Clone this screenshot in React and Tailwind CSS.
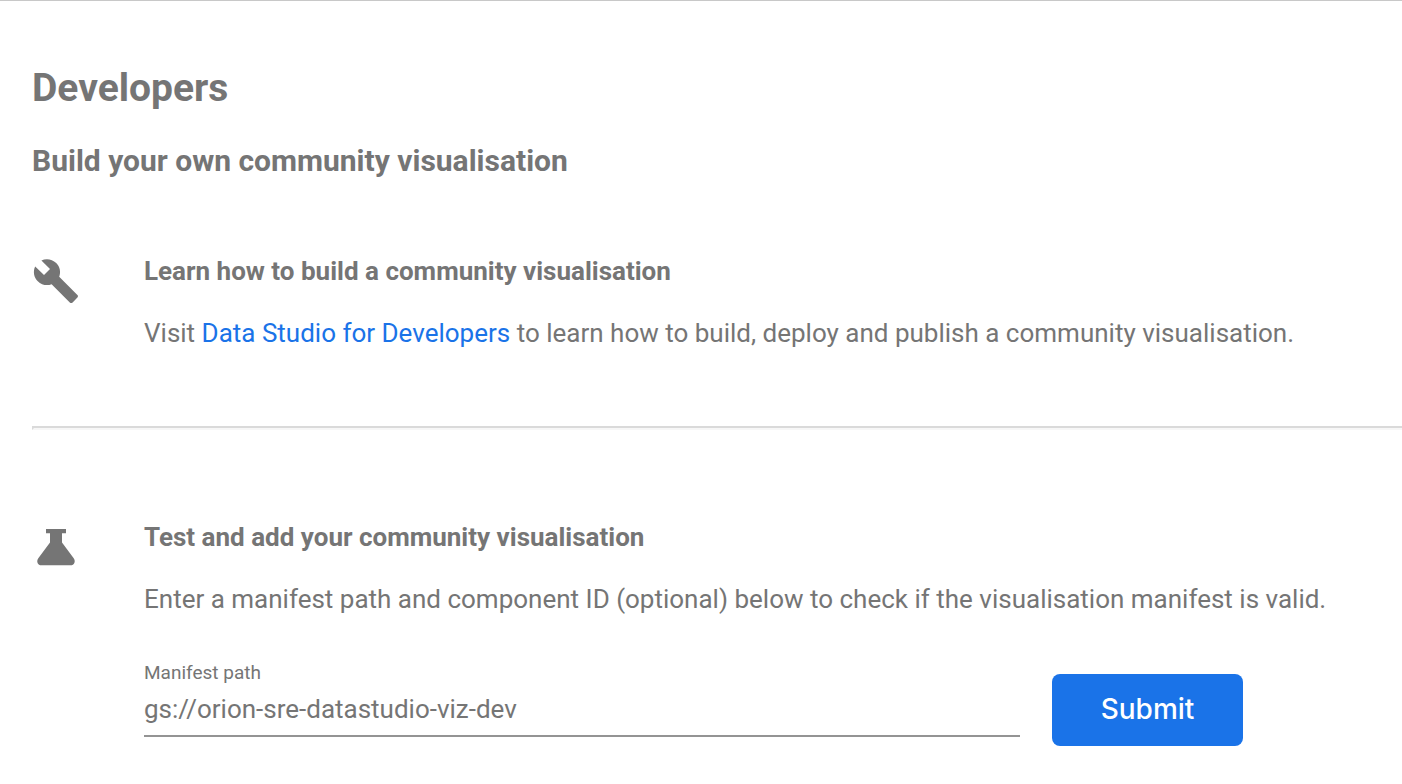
export default function App() {
  return (
    <main className="min-h-screen overflow-x-hidden border-t border-[#c8c8c8] bg-white pt-[60px] pl-8 font-['Roboto',sans-serif] text-[#757575]">
      <h1 className="text-[39px] leading-[54px] font-bold">Developers</h1>
      <h2 className="mt-[25px] text-[30px] leading-[42px] font-bold">Build your own community visualisation</h2>

      <section className="mt-[71px] flex">
        <svg className="mt-[4px] w-12 shrink-0" height="48" viewBox="0 0 24 24" fill="#757575" aria-hidden="true">
          <path d="M22.7 19l-9.1-9.1c.9-2.3.4-5-1.5-6.9-2-2-5-2.4-7.4-1.3L9 6 6 9 1.600 4.700C.4 7.100.9 10.100 2.900 12.100c1.900 1.900 4.600 2.400 6.900 1.500l9.100 9.100c.4.4 1 .4 1.400 0l2.300-2.300c.5-.4.5-1.100.1-1.400z" />
        </svg>
        <div className="ml-16 flex-1">
          <h3 className="text-[26px] leading-[36px] font-bold">Learn how to build a community visualisation</h3>
          <p className="mt-[26px] text-[26px] leading-[36px]">
            Visit <a href="#developers" className="text-[#1a73e8]">Data Studio for Developers</a> to learn how to build, deploy and publish a community visualisation.
          </p>
        </div>
      </section>

      <hr className="mt-[75px] h-1 border-2 border-r-0 border-t-[#dadada] border-b-[#f7f7f7] border-l-[#dadada]" />

      <section className="mt-[89px] flex">
        <svg className="mt-[5px] w-12 shrink-0" height="48" viewBox="0 0 48 48" fill="#757575" aria-hidden="true">
          <path d="M14 5h20v4.300h-4V18.500L41.700 34.200C44 37.300 42.300 41.300 38.500 41.300h-29C5.700 41.300 4 37.300 6.300 34.200L18 18.500V9.300h-4z" />
        </svg>
        <div className="ml-16 flex-1">
          <h3 className="text-[26px] leading-[36px] font-bold">Test and add your community visualisation</h3>
          <p className="mt-[26px] text-[26px] leading-[36px]">
            Enter a manifest path and component ID (optional) below to check if the visualisation manifest is valid.
          </p>
          <form className="mt-[44px] flex items-start pr-[159px]" onSubmit={(e) => e.preventDefault()}>
            <div className="flex-1">
              <label htmlFor="manifest" className="block text-[19px] leading-[24px]">Manifest path</label>
              <input id="manifest" type="text" defaultValue="gs://orion-sre-datastudio-viz-dev" className="block h-[52px] w-full border-b-2 border-[#949494] bg-transparent pb-[2px] text-[26px] outline-none" />
            </div>
            <button type="submit" className="mt-[13px] ml-8 h-[72px] w-[191px] rounded-lg bg-[#1a73e8] pb-[2px] font-['Inter',sans-serif] text-[28px] font-medium text-white">Submit</button>
          </form>
        </div>
      </section>
    </main>
  );
}
